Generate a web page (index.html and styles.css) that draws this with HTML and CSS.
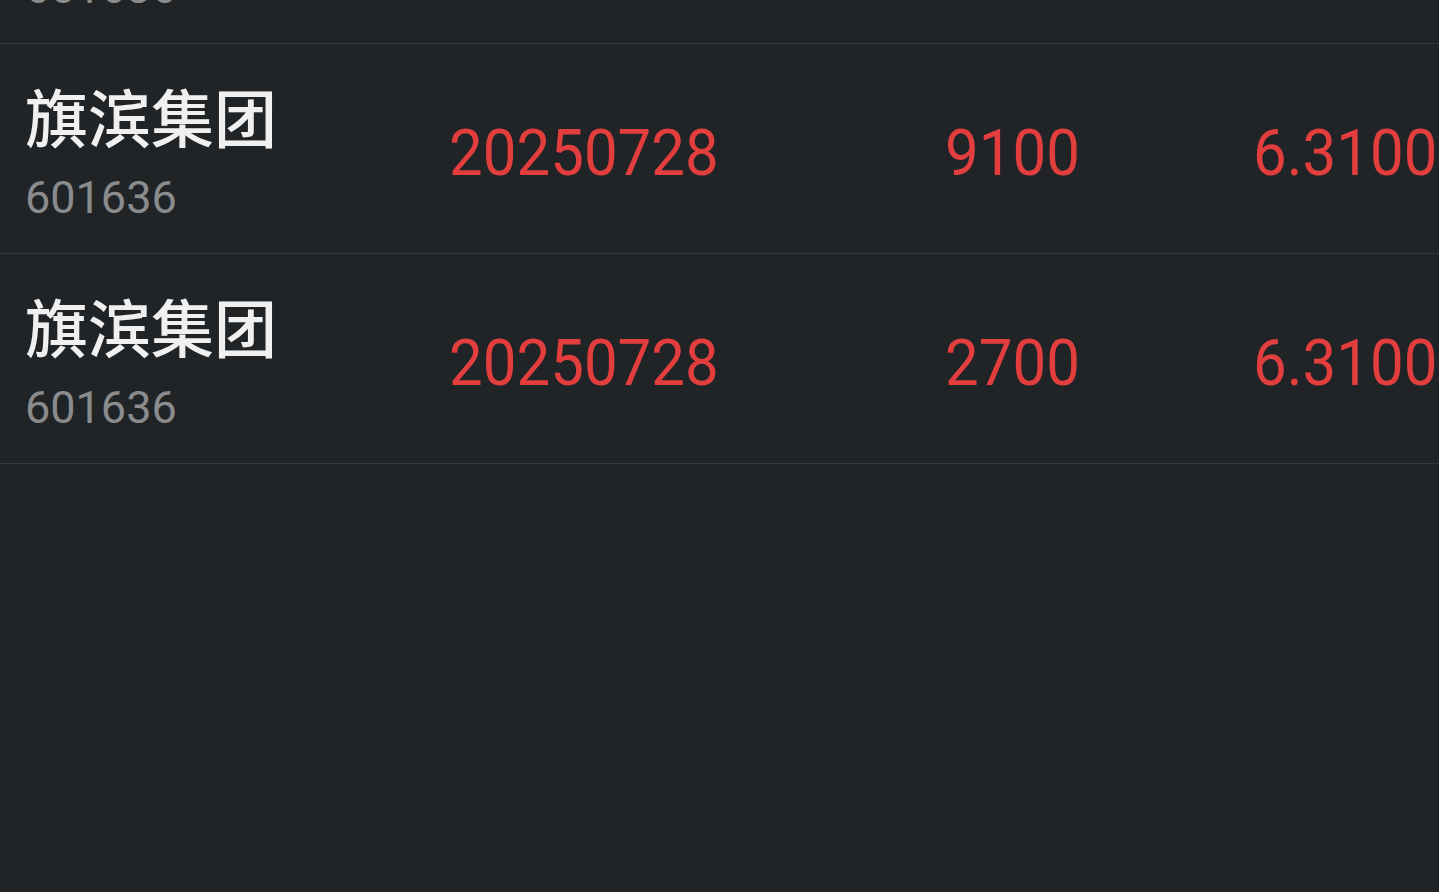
FILE: index.html
```html
<!DOCTYPE html>
<html lang="zh-CN">
<head>
<meta charset="utf-8">
<title>成交明细</title>
<link rel="stylesheet" href="styles.css">
</head>
<body>
<div class="list">
  <div class="row">
    <div class="name"><span class="cn">旗滨集团</span><span class="code">601636</span></div>
    <div class="num"><span>20250728</span></div>
    <div class="num"><span>9100</span></div>
    <div class="num"><span>6.3100</span></div>
  </div>
  <div class="row">
    <div class="name"><span class="cn">旗滨集团</span><span class="code">601636</span></div>
    <div class="num"><span>20250728</span></div>
    <div class="num"><span>9100</span></div>
    <div class="num"><span>6.3100</span></div>
  </div>
  <div class="row">
    <div class="name"><span class="cn">旗滨集团</span><span class="code">601636</span></div>
    <div class="num"><span>20250728</span></div>
    <div class="num"><span>2700</span></div>
    <div class="num"><span>6.3100</span></div>
  </div>
</div>
</body>
</html>
```
FILE: styles.css
```css
html, body {
  margin: 0;
  padding: 0;
  background: #212427;
  height: 100%;
  overflow: hidden;
}
.list {
  margin-top: -166px;
}
.row {
  box-sizing: border-box;
  height: 210px;
  border-bottom: 1px solid #34383b;
  display: grid;
  grid-template-columns: 449px 496px 308px 1fr;
  align-items: center;
  white-space: nowrap;
  overflow: hidden;
}
.name {
  padding-left: 25px;
  display: flex;
  flex-direction: column;
  margin-top: 8px;
}
.cn {
  font-family: "Noto Sans CJK SC", sans-serif;
  font-size: 63px;
  font-weight: 500;
  line-height: 70px;
  color: #f0f0f0;
}
.code {
  font-family: Roboto, sans-serif;
  font-size: 45px;
  line-height: 56px;
  margin-top: 20px;
  color: #8a8b8c;
}
.num {
  font-family: Roboto, sans-serif;
  font-size: 60px;
  color: #e33e3e;
  line-height: 1;
  margin-top: 9px;
}
.num span {
  display: inline-block;
  transform: scaleY(1.09);
}
```
